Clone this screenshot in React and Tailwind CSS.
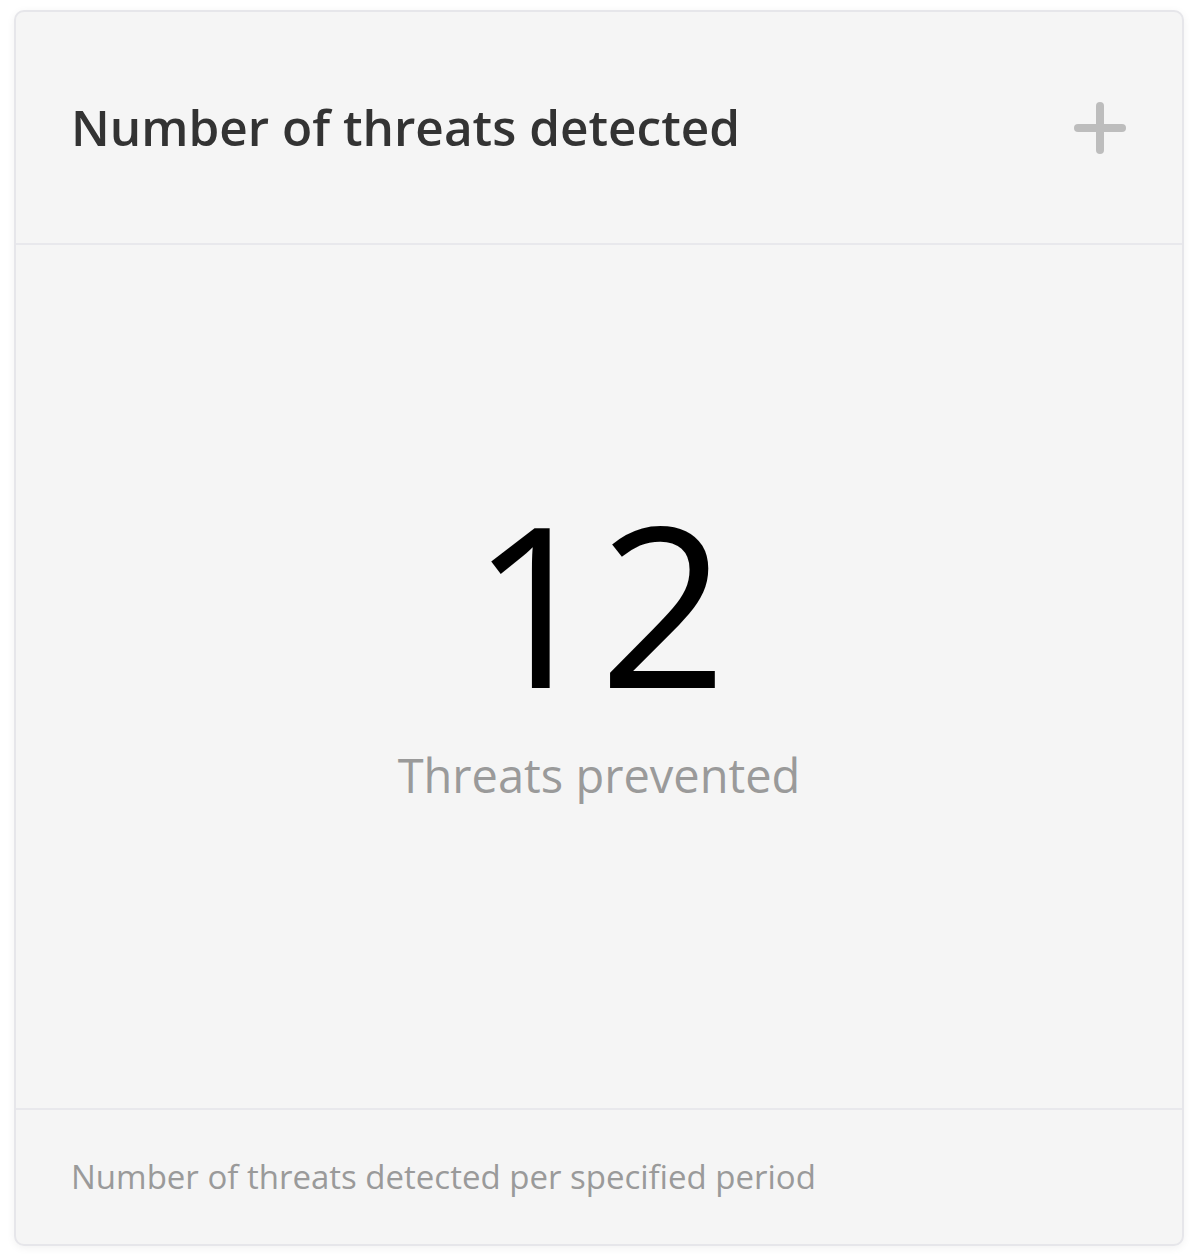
export default function App() {
  return (
    <div className="min-h-[1260px] bg-white pt-[10px] px-[14px] font-['Open_Sans',sans-serif]">
      <div className="flex h-[1236px] flex-col rounded-[10px] border-2 border-[#e6e6ea] bg-[#f5f5f5] shadow-[0_2px_8px_rgba(0,0,0,0.06)]">
        {/* Header */}
        <div className="flex h-[233px] items-center justify-between border-b-2 border-[#e8e8ec] pl-[55px] pr-[56px]">
          <h2 className="text-[49.5px] font-semibold leading-none text-[#333333]">Number of threats detected</h2>
          <button aria-label="Add" className="text-[#bdbdbd]">
            <PlusIcon />
          </button>
        </div>

        {/* Body */}
        <div className="flex flex-1 flex-col items-center justify-center pb-[64px]">
          <p className="text-[224px] font-normal leading-none text-black">12</p>
          <p className="mt-[38px] text-[47px] leading-none text-[#9a9a9a]">Threats prevented</p>
        </div>

        {/* Footer */}
        <div className="flex h-[136px] items-center border-t-2 border-[#e8e8ec] pl-[55px] pb-[2px]">
          <p className="text-[33px] leading-none text-[#9a9a9a]">Number of threats detected per specified period</p>
        </div>
      </div>
    </div>
  )
}

function PlusIcon() {
  return (
    <svg width="52" height="52" viewBox="0 0 52 52" fill="none" stroke="currentColor" strokeWidth="8" strokeLinecap="round">
      <line x1="26" y1="4" x2="26" y2="48" />
      <line x1="4" y1="26" x2="48" y2="26" />
    </svg>
  )
}
